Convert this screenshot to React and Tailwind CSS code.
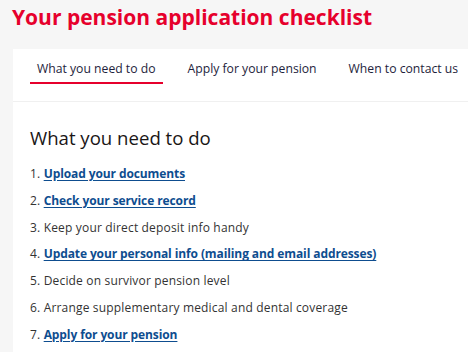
import React from "react";

const items = [
  { text: "Upload your documents", link: true },
  { text: "Check your service record", link: true },
  { text: "Keep your direct deposit info handy", link: false },
  { text: "Update your personal info (mailing and email addresses)", link: true },
  { text: "Decide on survivor pension level", link: false },
  { text: "Arrange supplementary medical and dental coverage", link: false },
  { text: "Apply for your pension", link: true },
];

export default function App() {
  return (
    <div
      className="w-[468px] h-[352px] overflow-hidden bg-[#f6f6f6]"
      style={{ fontFamily: '"Open Sans", sans-serif' }}
    >
      <h1 className="pl-[12px] pt-[5px] text-[21px] leading-[25px] font-bold text-[#e6002c]">
        Your pension application checklist
      </h1>
      <div className="ml-[13px] mt-[19px] bg-white h-[400px]">
        <div className="flex items-start gap-[18px] pl-[17px] pt-[12px] h-[53px] border-b border-[#f0f0f0]">
          <div className="px-[7px] pb-[5px] border-b-2 border-[#e6002c] text-[12.2px] leading-[16px] text-[#1e1e3c] whitespace-nowrap">
            What you need to do
          </div>
          <div className="px-[7px] pb-[5px] border-b-2 border-transparent text-[12.2px] leading-[16px] text-[#1e1e3c] whitespace-nowrap">
            Apply for your pension
          </div>
          <div className="px-[7px] pb-[5px] border-b-2 border-transparent text-[12.2px] leading-[16px] text-[#1e1e3c] whitespace-nowrap">
            When to contact us
          </div>
        </div>
        <div className="pl-[17px] pt-[24px]">
          <h2 className="text-[18.6px] leading-[23px] font-medium text-[#1a1616]">
            What you need to do
          </h2>
          <ol className="mt-[17px] flex flex-col">
            {items.map((it, i) => (
              <li
                key={i}
                className="h-[26.8px] text-[12px] leading-[16px] tracking-[0.17px] text-[#333333] whitespace-nowrap"
              >
                {i + 1}.{" "}
                {it.link ? (
                  <a href="#" className="font-bold tracking-[-0.1px] text-[#0e4d8f] underline underline-offset-2">
                    {it.text}
                  </a>
                ) : (
                  it.text
                )}
              </li>
            ))}
          </ol>
        </div>
      </div>
    </div>
  );
}
